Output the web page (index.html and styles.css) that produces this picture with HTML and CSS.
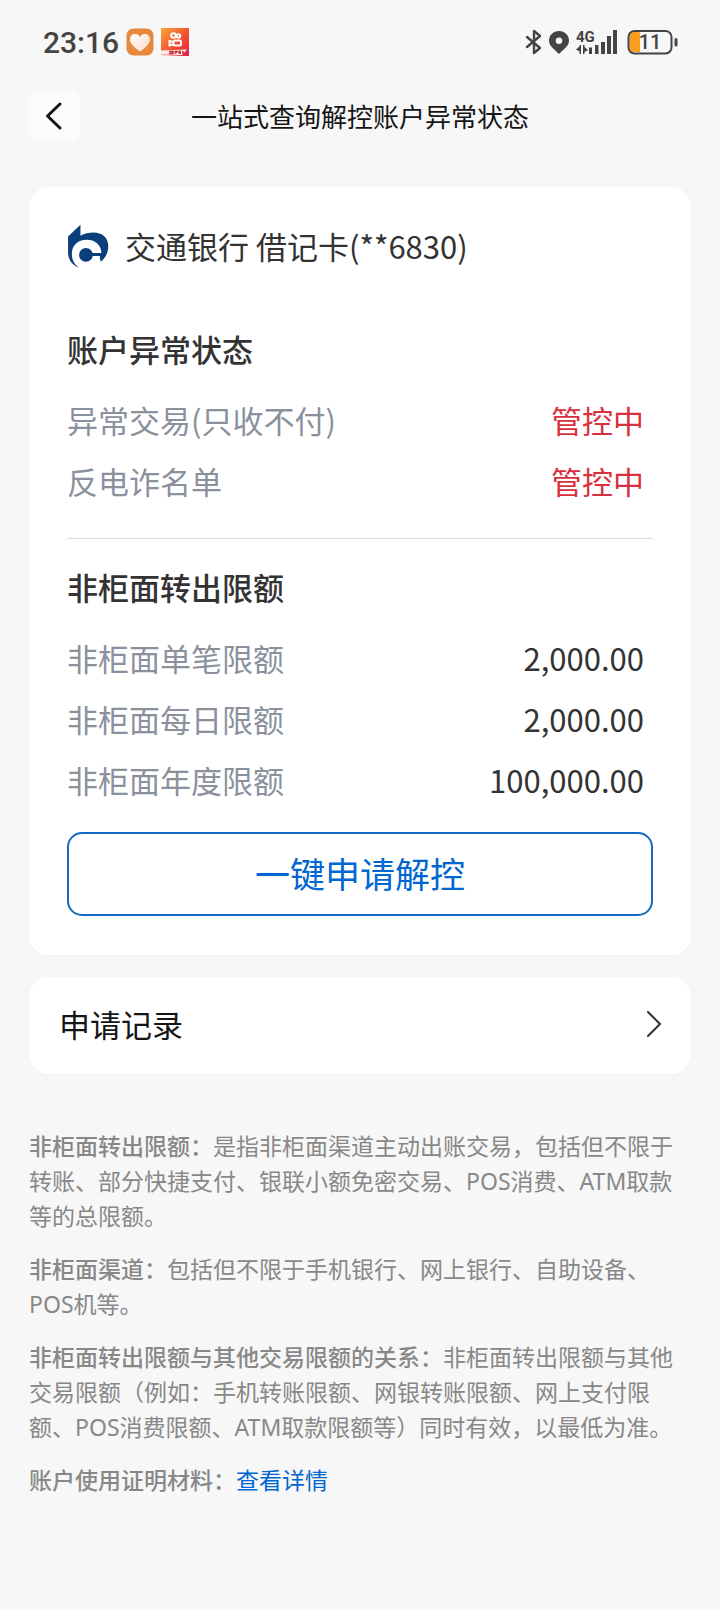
FILE: index.html
```html
<!DOCTYPE html>
<html lang="zh-CN">
<head>
<meta charset="utf-8">
<meta name="viewport" content="width=device-width, initial-scale=1">
<title>一站式查询解控账户异常状态</title>
<link rel="stylesheet" href="styles.css">
</head>
<body>
<div class="status-bar">
  <div class="status-left">
    <span class="clock">23:16</span>
    <svg class="app-icon" viewBox="0 0 28 28" aria-hidden="true">
      <defs>
        <linearGradient id="heart" x1="0" y1="0" x2="1" y2="1"><stop offset="0" stop-color="#fff"/><stop offset="1" stop-color="#fbd9c2"/></linearGradient>
      </defs>
      <rect x="0.500" y="0.500" width="27" height="27" rx="7" fill="#e8883c"/>
      <path d="M14 23.500C9 20 4 16 4 11.500C4 8 6.500 6 9 6C11.500 6 13 7.300 14 9C15 7.300 16.500 6 19 6C21.500 6 24 8 24 11.500C24 16 19 20 14 23.500Z" fill="url(#heart)"/>
    </svg>
    <svg class="app-icon" viewBox="0 0 28 28" aria-hidden="true">
      <defs>
        <linearGradient id="video" x1="0" y1="0" x2="1" y2="1"><stop offset="0" stop-color="#f9a83a"/><stop offset=".55" stop-color="#f2502f"/><stop offset="1" stop-color="#e51e4a"/></linearGradient>
      </defs>
      <path d="M0 0H28V28H22L0 27Z" fill="url(#video)"/>
      <g fill="none" stroke="#fff" stroke-width="2">
        <circle cx="12.500" cy="7.500" r="2.300"/><circle cx="17.500" cy="8" r="1.800"/>
        <rect x="12.500" y="12.500" width="7.500" height="5" rx="1.500"/><path d="M12 14L8.500 13V17.500L12 16.500"/>
      </g>
      <path d="M0 22.500L26 21.500L21 27L0 26.500Z" fill="#fff" opacity=".9"/>
      <path d="M8 23.500H12V25.500H8M13.500 23.500H16L14 25.500M17 24.500H20M19 22.500V26M22 23V26" fill="none" stroke="#b8262b" stroke-width="1.500"/>
    </svg>
  </div>
  <svg class="system-icons" viewBox="0 0 156 28" role="img" aria-label="蓝牙、定位、4G信号、电量11%">
    <path d="M2 9L15 20L9 25V3L15 8L2 19" fill="none" stroke="#444" stroke-width="2.400" stroke-linejoin="round" stroke-linecap="round"/>
    <path fill-rule="evenodd" d="M34 3C28 3 24 7.500 24 12.500C24 18 28.500 20.500 34 26C39.500 20.500 44 18 44 12.500C44 7.500 40 3 34 3ZM34 9.500A3.300 3.300 0 1 1 34 16.100A3.300 3.300 0 1 1 34 9.500Z" fill="#444"/>
    <text class="network" x="51" y="14">4G</text>
    <path d="M56 17V26H54.500V23.500L51 21.500L54.500 18.500V17ZM58 17H59.500V19L63 22L59.500 24V26H58Z" fill="#444"/>
    <path d="M64 19.500h3V26h-3ZM70 17h3.500v9H70ZM76 14h4v12h-4ZM82 8h4v18h-4ZM88 2h4v24h-4Z" fill="#444"/>
    <path d="M109 4H115V24H109Q104.500 24 104.500 19V9Q104.500 4 109 4Z" fill="#fa9d20"/>
    <rect x="103.500" y="3" width="43" height="22.500" rx="6" fill="none" stroke="#444" stroke-width="2"/>
    <rect x="149.500" y="10" width="3" height="8.500" rx="1.500" fill="#444"/>
    <text class="battery" x="125" y="21" text-anchor="middle">11</text>
  </svg>
</div>

<header class="header">
  <button class="back" type="button" aria-label="返回">
    <svg viewBox="0 0 52 52" aria-hidden="true"><path d="M31 14L18.500 26L31 38" fill="none" stroke="#151515" stroke-width="3" stroke-linecap="round" stroke-linejoin="round"/></svg>
  </button>
  <h1 class="title">一站式查询解控账户异常状态</h1>
</header>

<main class="content">
  <section class="card account">
    <div class="bank">
      <svg class="bank-logo" viewBox="0 0 120 128" aria-hidden="true">
        <path d="M2 36L38 2V34C50 28 62 25 76 25C102 25 119 40 119 65C119 84 110 100 97 110L94 96C98 92 99 87 99 82C97 60 80 46 56 46C30 46 13 64 13 86C13 104 20 118 34 127C14 120 2 104 2 82Z" fill="#0b3f7c"/>
        <circle cx="54" cy="90" r="20" fill="#0b3f7c"/>
        <path d="M68 84H101L99 93H68Z" fill="#0b3f7c"/>
      </svg>
      <span>交通银行 借记卡(**6830)</span>
    </div>

    <h2 class="section-title">账户异常状态</h2>
    <dl class="rows">
      <div class="row"><dt>异常交易(只收不付)</dt><dd class="alert">管控中</dd></div>
      <div class="row"><dt>反电诈名单</dt><dd class="alert">管控中</dd></div>
    </dl>

    <hr class="divider">

    <h2 class="section-title">非柜面转出限额</h2>
    <dl class="rows">
      <div class="row"><dt>非柜面单笔限额</dt><dd>2,000.00</dd></div>
      <div class="row"><dt>非柜面每日限额</dt><dd>2,000.00</dd></div>
      <div class="row"><dt>非柜面年度限额</dt><dd>100,000.00</dd></div>
    </dl>

    <button class="apply" type="button">一键申请解控</button>
  </section>

  <button class="card records" type="button">
    <span>申请记录</span>
    <svg class="chevron" viewBox="0 0 16 28" aria-hidden="true"><path d="M2 2L14 14L2 26" fill="none" stroke="#333" stroke-width="2" stroke-linecap="round" stroke-linejoin="round"/></svg>
  </button>

  <section class="notes">
    <p><strong>非柜面转出限额：</strong>是指非柜面渠道主动出账交易，包括但不限于转账、部分快捷支付、银联小额免密交易、POS消费、ATM取款等的总限额。</p>
    <p><strong>非柜面渠道：</strong>包括但不限于手机银行、网上银行、自助设备、POS机等。</p>
    <p><strong>非柜面转出限额与其他交易限额的关系：</strong>非柜面转出限额与其他交易限额（例如：手机转账限额、网银转账限额、网上支付限额、POS消费限额、ATM取款限额等）同时有效，以最低为准。</p>
    <p><strong>账户使用证明材料：</strong><a href="#">查看详情</a></p>
  </section>
</main>
</body>
</html>
```
FILE: styles.css
```css
* {
  box-sizing: border-box;
}

body {
  margin: 0;
  background: #f7f7f7;
  color: #333;
  font-family: "Noto Sans CJK SC", sans-serif;
}

h1, h2, p, dl, dd {
  margin: 0;
}

button {
  font-family: inherit;
  cursor: pointer;
}

.status-bar {
  display: flex;
  align-items: center;
  justify-content: space-between;
  height: 84px;
  padding: 0 39px 0 43px;
  font-family: Roboto, sans-serif;
}

.status-left {
  display: flex;
  align-items: center;
  gap: 7px;
}

.clock {
  color: #444;
  font-size: 30px;
  font-weight: 500;
}

.app-icon {
  width: 28px;
  height: 28px;
}

.system-icons {
  width: 156px;
  height: 28px;
}

.network {
  fill: #444;
  font-size: 15px;
  font-weight: 700;
}

.battery {
  fill: #444;
  font-size: 20px;
  font-weight: 500;
}

.header {
  display: grid;
  grid-template-columns: 52px 1fr 52px;
  align-items: center;
  height: 64px;
  padding: 0 29px;
}

.back {
  width: 52px;
  height: 52px;
  padding: 0;
  border: 0;
  border-radius: 14px;
  background: #fbfbfb;
}

.back svg {
  display: block;
}

.title {
  color: #151515;
  font-size: 26px;
  font-weight: 400;
  line-height: 36px;
  text-align: center;
}

.content {
  padding: 39px 29px;
}

.card {
  border: 0;
  border-radius: 20px;
  background: #fff;
  box-shadow: 0 2px 8px rgba(0, 0, 0, 0.02);
}

.account {
  padding: 29px 38px 39px;
  font-size: 31px;
}

.bank {
  display: flex;
  align-items: center;
  gap: 16px;
  margin-bottom: 42px;
  line-height: 60px;
}

.bank-logo {
  width: 42px;
  height: 44px;
}

.section-title {
  margin-bottom: 10px;
  font-size: 31px;
  font-weight: 500;
  line-height: 61px;
}

.row {
  display: flex;
  justify-content: space-between;
  padding-right: 9px;
  line-height: 61px;
}

.row dt {
  color: #8a919d;
}

.row .alert {
  color: #d9303e;
}

.divider {
  height: 1px;
  margin: 27px 0 17px;
  border: 0;
  background: #ddd;
}

.apply {
  display: block;
  width: 100%;
  margin-top: 22px;
  padding: 0 0 2px;
  border: 2px solid #1768c4;
  border-radius: 15px;
  background: #fff;
  color: #0066d1;
  font-size: 35px;
  line-height: 78px;
}

.records {
  display: flex;
  align-items: center;
  justify-content: space-between;
  width: 100%;
  margin-top: 22px;
  padding: 0 29px 3px 30px;
  color: #151515;
  font-size: 31px;
  line-height: 94px;
}

.chevron {
  width: 16px;
  height: 28px;
}

.notes {
  display: flex;
  flex-direction: column;
  gap: 18px;
  margin-top: 55px;
  color: #888;
  font-family: "Noto Sans", "Noto Sans CJK SC", sans-serif;
  font-size: 23px;
  line-height: 35px;
}

.notes strong {
  font-weight: 500;
}

.notes a {
  color: #0066d1;
  text-decoration: none;
}
```
